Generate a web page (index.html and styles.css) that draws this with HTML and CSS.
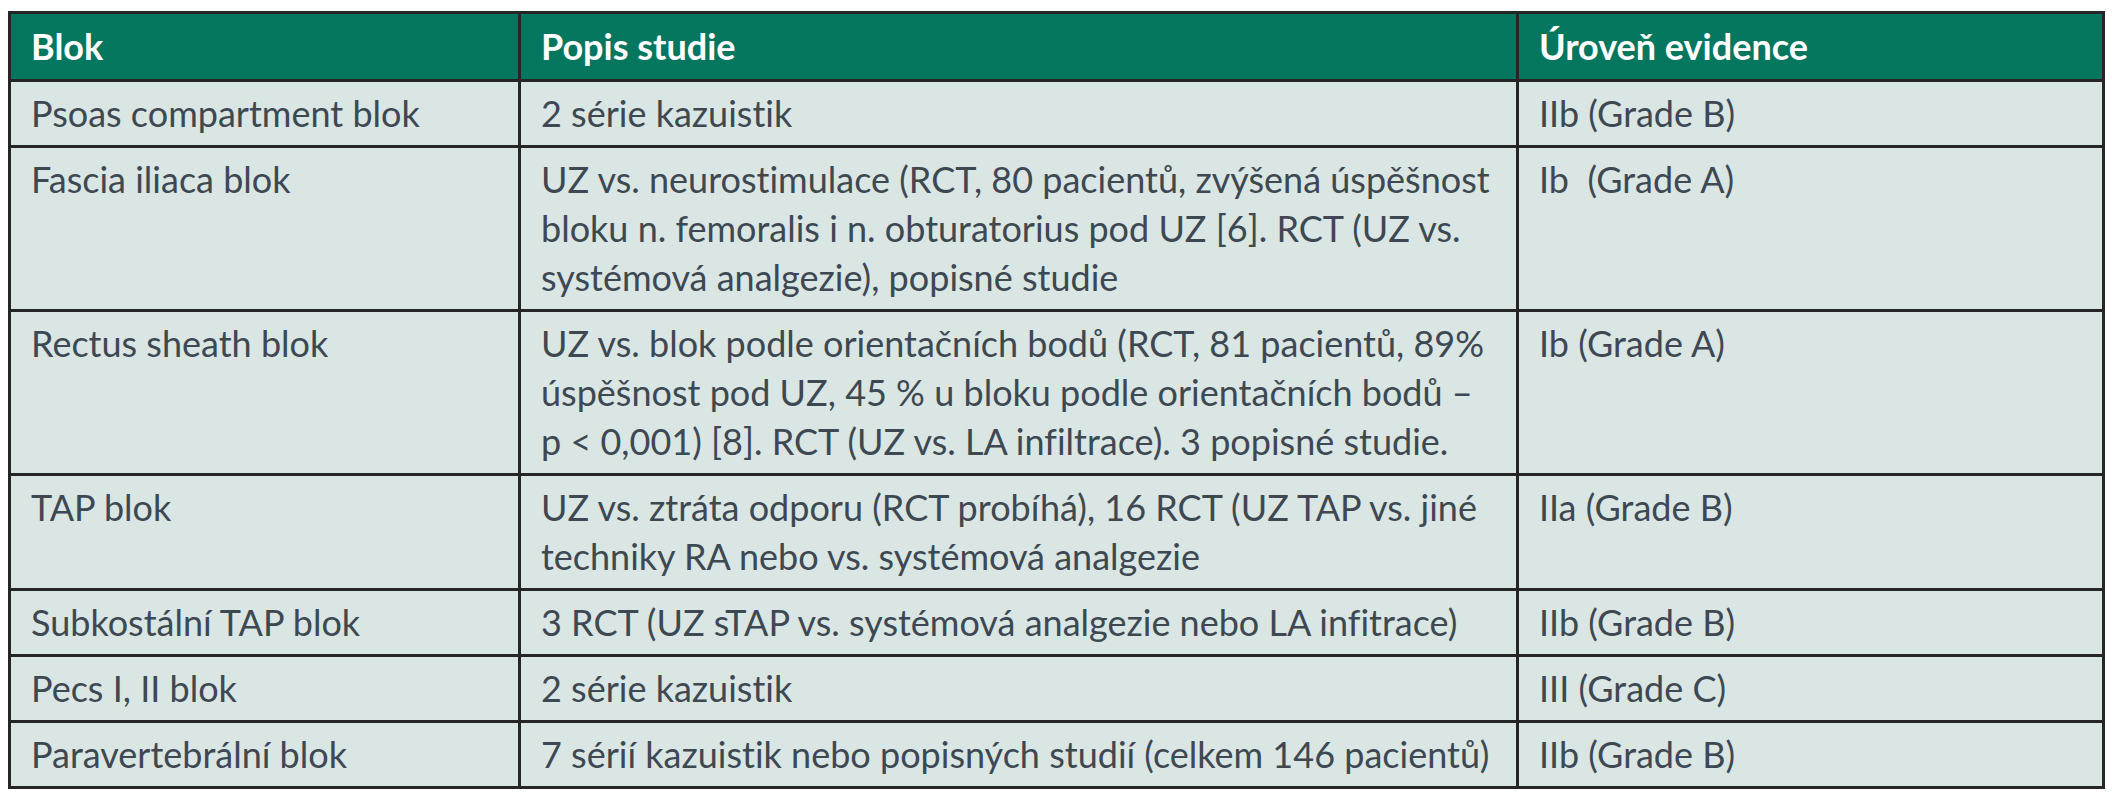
FILE: index.html
```html
<!DOCTYPE html>
<html lang="cs">
<head>
<meta charset="utf-8">
<title>Bloky – úroveň evidence</title>
<link rel="stylesheet" href="styles.css">
</head>
<body>
<div class="page">
<table class="evidence">
  <colgroup>
    <col class="c-blok">
    <col class="c-popis">
    <col class="c-uroven">
  </colgroup>
  <thead>
    <tr><th>Blok</th><th>Popis studie</th><th>Úroveň evidence</th></tr>
  </thead>
  <tbody>
    <tr><td>Psoas compartment blok</td><td>2 série kazuistik</td><td>IIb (Grade B)</td></tr>
    <tr><td>Fascia iliaca blok</td><td>UZ vs. neurostimulace (RCT, 80 pacientů, zvýšená úspěšnost<br>bloku n. femoralis i n. obturatorius pod UZ [6]. RCT (UZ vs.<br>systémová analgezie), popisné studie</td><td>Ib&nbsp; (Grade A)</td></tr>
    <tr><td>Rectus sheath blok</td><td>UZ vs. blok podle orientačních bodů (RCT, 81 pacientů, 89%<br>úspěšnost pod UZ, 45 % u bloku podle orientačních bodů –<br>p &lt; 0,001) [8]. RCT (UZ vs. LA infiltrace). 3 popisné studie.</td><td>Ib (Grade A)</td></tr>
    <tr><td>TAP blok</td><td>UZ vs. ztráta odporu (RCT probíhá), 16 RCT (UZ TAP vs. jiné<br>techniky RA nebo vs. systémová analgezie</td><td>IIa (Grade B)</td></tr>
    <tr><td>Subkostální TAP blok</td><td>3 RCT (UZ sTAP vs. systémová analgezie nebo LA infitrace)</td><td>IIb (Grade B)</td></tr>
    <tr><td>Pecs I, II blok</td><td>2 série kazuistik</td><td>III (Grade C)</td></tr>
    <tr><td>Paravertebrální blok</td><td>7 sérií kazuistik nebo popisných studií (celkem 146 pacientů)</td><td>IIb (Grade B)</td></tr>
  </tbody>
</table>
</div>
</body>
</html>
```

FILE: styles.css
```css
html, body {
  margin: 0;
  padding: 0;
  background: #ffffff;
}

.page {
  padding: 11px 8px 0 8px;
}

.evidence {
  width: 2097px;
  border-collapse: collapse;
  table-layout: fixed;
  font-family: Lato, "Liberation Sans", sans-serif;
  font-size: 36px;
  line-height: 49px;
  color: #3e4852;
  border: 3px solid #262626;
  font-variant-ligatures: none;
}

.c-blok { width: 510px; }
.c-popis { width: 998px; }
.c-uroven { width: auto; }

.evidence th,
.evidence td {
  border: 3px solid #262626;
  text-align: left;
  vertical-align: top;
  white-space: nowrap;
  padding: 7px 18px 7px 20px;
}

.evidence th {
  background: #05775f;
  color: #ffffff;
  font-weight: 700;
  padding-top: 8px;
  padding-bottom: 8px;
}

.evidence td {
  background: #d9e6e3;
  font-weight: 400;
}
```
